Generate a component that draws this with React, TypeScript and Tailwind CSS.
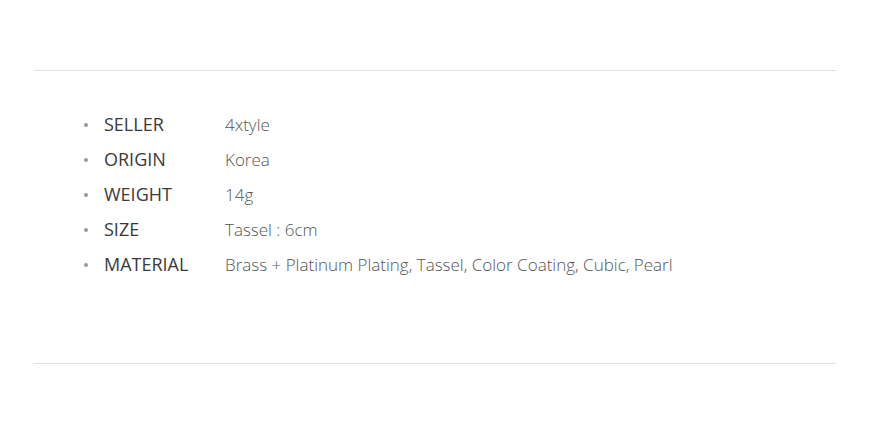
import React from "react"

const specs = [
  { label: "SELLER", value: "4xtyle" },
  { label: "ORIGIN", value: "Korea" },
  { label: "WEIGHT", value: "14g" },
  { label: "SIZE", value: "Tassel : 6cm" },
  { label: "MATERIAL", value: "Brass + Platinum Plating, Tassel, Color Coating, Cubic, Pearl" },
]

const App = () => {
  return (
    <div className="h-[437px] w-[873px] bg-white pl-[34px] pr-[37px] pt-[70px]" style={{ fontFamily: "'Open Sans', sans-serif" }}>
      <div className="border-t border-b border-[#e0e0e0] pt-[36px] pb-[81px]">
        <ul className="pl-[50px]">
          {specs.map((item) => (
            <li key={item.label} className="flex h-[35px] items-center">
              <span className="mr-[16px] h-[4px] w-[4px] rounded-full bg-[#9a9a9a]" />
              <span className="w-[121px] text-[18px] text-[#3a3a3a]">{item.label}</span>
              <span className="text-[17px] font-light text-[#555]">{item.value}</span>
            </li>
          ))}
        </ul>
      </div>
    </div>
  )
}

export default App
